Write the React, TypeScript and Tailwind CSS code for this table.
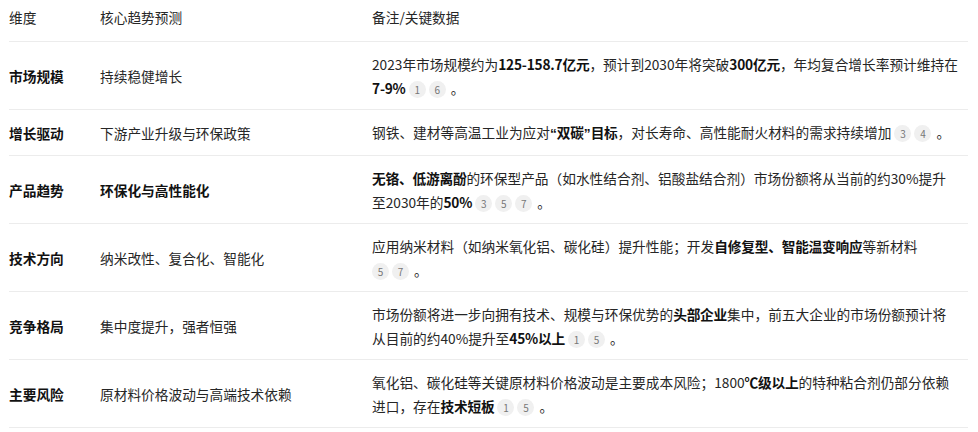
import React from 'react';

type Seg = string | { b: string } | { q: string } | { c: number[] };

type Row = {
  dim: string;
  trend: string;
  trendBold?: boolean;
  note: Seg[];
};

const rows: Row[] = [
  {
    dim: '市场规模',
    trend: '持续稳健增长',
    note: [
      '2023年市场规模约为',
      { b: '125-158.7亿元' },
      '，预计到2030年将突破',
      { b: '300亿元' },
      '，年均复合增长率预计维持在',
      { b: '7-9%' },
      ' ',
      { c: [1, 6] },
    ],
  },
  {
    dim: '增长驱动',
    trend: '下游产业升级与环保政策',
    note: [
      '钢铁、建材等高温工业为应对',
      { q: '“' },
      { b: '双碳' },
      { q: '”' },
      { b: '目标' },
      '，对长寿命、高性能耐火材料的需求持续增加 ',
      { c: [3, 4] },
    ],
  },
  {
    dim: '产品趋势',
    trend: '环保化与高性能化',
    trendBold: true,
    note: [
      { b: '无铬、低游离酚' },
      '的环保型产品（如水性结合剂、铝酸盐结合剂）市场份额将从当前的约30%提升至2030年的',
      { b: '50%' },
      ' ',
      { c: [3, 5, 7] },
    ],
  },
  {
    dim: '技术方向',
    trend: '纳米改性、复合化、智能化',
    note: [
      '应用纳米材料（如纳米氧化铝、碳化硅）提升性能；开发',
      { b: '自修复型、智能温变响应' },
      '等新材料 ',
      { c: [5, 7] },
    ],
  },
  {
    dim: '竞争格局',
    trend: '集中度提升，强者恒强',
    note: [
      '市场份额将进一步向拥有技术、规模与环保优势的',
      { b: '头部企业' },
      '集中，前五大企业的市场份额预计将从目前的约40%提升至',
      { b: '45%以上' },
      ' ',
      { c: [1, 5] },
    ],
  },
  {
    dim: '主要风险',
    trend: '原材料价格波动与高端技术依赖',
    note: [
      '氧化铝、碳化硅等关键原材料价格波动是主要成本风险；1800',
      { b: '℃级以上' },
      '的特种粘合剂仍部分依赖进口，存在',
      { b: '技术短板' },
      ' ',
      { c: [1, 5] },
    ],
  },
];

// 引用角标 + 句号，保持在同一行
function Cite({ nums }: { nums: number[] }) {
  return (
    <span className="whitespace-nowrap">
      {nums.map((n) => (
        <span
          key={n}
          className="mr-[3px] inline-block h-[17px] w-[17px] rounded-full bg-[#f0f0f0] text-center align-middle text-[10px] leading-[17px] text-[#777]"
        >
          {n}
        </span>
      ))}
      <span className="ml-[2px]">。</span>
    </span>
  );
}

function Note({ segs }: { segs: Seg[] }) {
  return (
    <>
      {segs.map((s, i) => {
        if (typeof s === 'string') return <span key={i}>{s}</span>;
        if ('b' in s)
          return (
            <strong key={i} className="font-bold tracking-[-0.2px] text-[#111]">
              {s.b}
            </strong>
          );
        if ('q' in s)
          return (
            <strong key={i} className="font-['Liberation_Sans'] font-bold text-[#111]">
              {s.q}
            </strong>
          );
        return <Cite key={i} nums={s.c} />;
      })}
    </>
  );
}

export default function App() {
  return (
    <div
      className="h-[432px] w-[978px] overflow-hidden bg-white pl-[9px] pr-[10px] text-[13.7px] leading-[24px] text-[#262626]"
      style={{ fontFamily: '"Noto Sans CJK SC", sans-serif' }}
    >
      {/* 表头 */}
      <div className="grid grid-cols-[91px_272px_1fr] border-b border-[#ececec] pt-[5px] pb-[12px]">
        <div>维度</div>
        <div>核心趋势预测</div>
        <div>备注/关键数据</div>
      </div>

      {rows.map((r) => (
        <div
          key={r.dim}
          className="grid grid-cols-[91px_272px_1fr] items-center border-b border-[#ececec] py-[9.5px]"
        >
          <div className="font-bold text-[#111]">{r.dim}</div>
          <div className={r.trendBold ? 'font-bold text-[#111]' : ''}>{r.trend}</div>
          <div className="pr-[10px]">
            <Note segs={r.note} />
          </div>
        </div>
      ))}
    </div>
  );
}
